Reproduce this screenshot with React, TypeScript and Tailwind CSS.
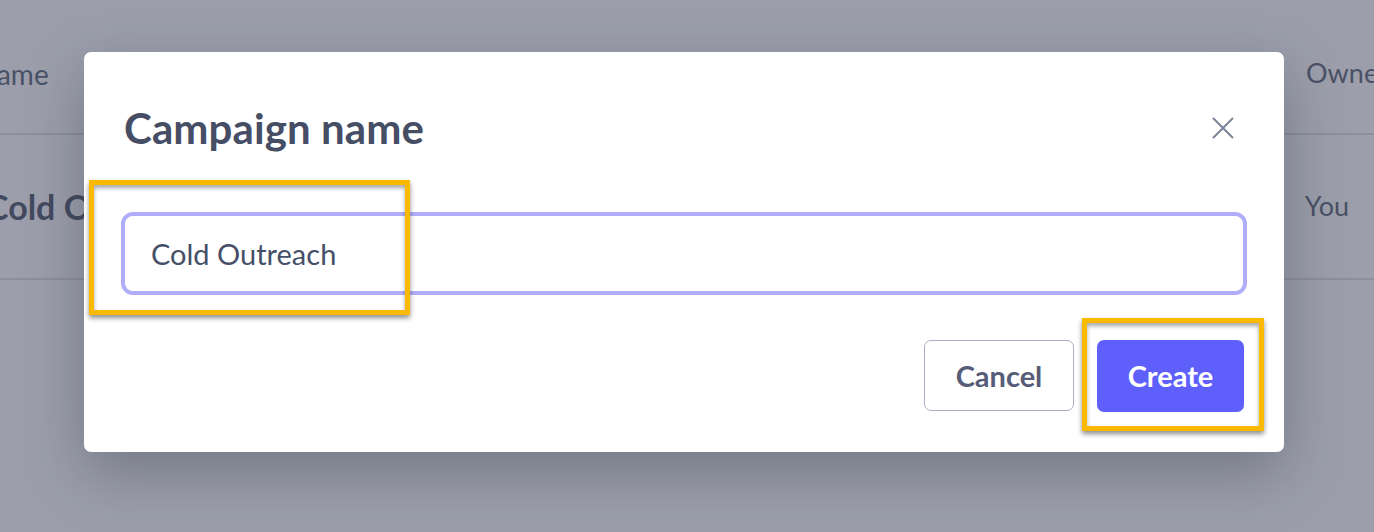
import React from "react";

export default function App() {
  const font = { fontFamily: "Lato, 'Noto Sans', sans-serif" };
  return (
    <div className="relative w-[1374px] h-[532px] overflow-hidden bg-[#9c9fab]" style={font}>
      {/* background table */}
      <div className="flex flex-col">
        <div className="flex items-center justify-between h-[135px] border-b-2 border-[#8d909c] pt-[14px]">
          <span className="ml-[-24px] text-[28px] text-[#4a5167]">Name</span>
          <span className="mr-[-20px] text-[27px] text-[#4a5167] w-[88px]">Owner</span>
        </div>
        <div className="flex items-center justify-between h-[145px] border-b-2 border-[#8d909c]">
          <span className="ml-[-14px] text-[34px] font-bold text-[#434a60]">Cold Outreach</span>
          <span className="mr-[25px] text-[27px] text-[#4a5167]">You</span>
        </div>
      </div>

      {/* modal */}
      <div className="absolute left-[84px] top-[52px] w-[1200px] h-[400px] bg-white rounded-[7px] shadow-[0_20px_60px_rgba(40,44,60,0.35)] flex flex-col px-[37px] pt-[50px]">
        <div className="flex items-center justify-between h-[52px]">
          <h1 className="ml-[3px] text-[42px] leading-[52px] font-bold text-[#464e66] tracking-[0.1px]">Campaign name</h1>
          <svg width="24" height="24" viewBox="0 0 24 24" className="mr-[12px]" stroke="#7c829a" strokeWidth="2" fill="none">
            <path d="M2 2 L22 22 M22 2 L2 22" />
          </svg>
        </div>
        <div className="mt-[58px] h-[83px] shrink-0 rounded-[12px] border-[4px] border-[#b0adfb] flex items-center pl-[26px]">
          <span className="text-[29px] text-[#464f67]">Cold Outreach</span>
        </div>
        <div className="mt-[45px] flex justify-end gap-[23px] pr-[3px]">
          <button className="w-[150px] h-[71px] rounded-[7px] border border-[#a9b1c9] text-[29px] font-bold text-[#555d78] bg-white">Cancel</button>
          <button className="w-[147px] h-[72px] rounded-[7px] bg-[#5f5ffc] text-[29px] font-bold text-white">Create</button>
        </div>
      </div>

      {/* annotation highlights */}
      <div className="absolute left-[89px] top-[180px] w-[321px] h-[135px] border-[5px] border-[#fbb900] shadow-[0_3px_5px_rgba(0,0,0,0.45),inset_0_3px_4px_rgba(0,0,0,0.35)]" />
      <div className="absolute left-[1082px] top-[318px] w-[182px] h-[113px] border-[5px] border-[#fbb900] shadow-[0_3px_5px_rgba(0,0,0,0.45),inset_0_3px_4px_rgba(0,0,0,0.35)]" />
    </div>
  );
}
